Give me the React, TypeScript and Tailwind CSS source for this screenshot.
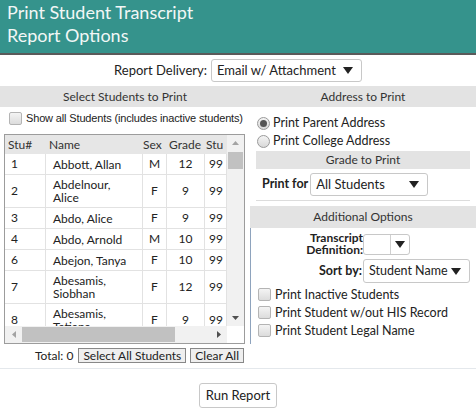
import { useState } from "react";

type Student = { id: number; name: string[]; sex: string; grade: number };

const students: Student[] = [
  { id: 1, name: ["Abbott, Allan"], sex: "M", grade: 12 },
  { id: 2, name: ["Abdelnour,", "Alice"], sex: "F", grade: 9 },
  { id: 3, name: ["Abdo, Alice"], sex: "F", grade: 9 },
  { id: 4, name: ["Abdo, Arnold"], sex: "M", grade: 10 },
  { id: 6, name: ["Abejon, Tanya"], sex: "F", grade: 10 },
  { id: 7, name: ["Abesamis,", "Siobhan"], sex: "F", grade: 12 },
  { id: 8, name: ["Abesamis,", "Tatiana"], sex: "F", grade: 9 },
];

const geo = { fontFamily: "Lato, 'Open Sans', sans-serif" };
const arial = { fontFamily: "'Liberation Sans', Arial, sans-serif" };

function Caret() {
  return (
    <svg width="10" height="7" viewBox="0 0 10 7" className="shrink-0">
      <path d="M0 0h10L5 7z" fill="#222" />
    </svg>
  );
}

function Select({ value, className }: { value: string; className: string }) {
  return (
    <div
      className={`flex items-center justify-between whitespace-nowrap rounded-[3px] border border-[#c8c8c8] bg-white pl-[5px] pr-[8px] text-[#222] ${className}`}
    >
      <span>{value}</span>
      <Caret />
    </div>
  );
}

function Check({ label }: { label: string }) {
  return (
    <label className="flex items-center gap-[4px] whitespace-nowrap leading-[15px]">
      <span className="h-[13px] w-[13px] shrink-0 rounded-[2px] border border-[#b4b4b4] bg-gradient-to-b from-[#f4f4f4] to-[#dcdcdc]" />
      <span>{label}</span>
    </label>
  );
}

function Radio({ label, checked }: { label: string; checked?: boolean }) {
  return (
    <div className="flex items-center gap-[3px] leading-[16px]">
      <span className="flex h-[13px] w-[13px] items-center justify-center rounded-full border border-[#9a9a9a] bg-gradient-to-b from-[#f4f4f4] to-[#d8d8d8]">
        {checked && <span className="h-[7px] w-[7px] rounded-full bg-[#555]" />}
      </span>
      <span>{label}</span>
    </div>
  );
}

function Bar({ children, className = "" }: { children: React.ReactNode; className?: string }) {
  return (
    <div className={`flex items-center justify-center bg-[#e3e3e3] text-[12px] text-[#333] ${className}`}>
      {children}
    </div>
  );
}

function StudentTable() {
  const cell = "flex items-center border-b border-r border-[#e2e2e2]";
  return (
    <div className="relative ml-[4px] mt-[8px] h-[210px] w-[241px] overflow-hidden border border-[#9c9c9c] bg-white text-[12px] text-[#222]">
      <div className="flex h-[19px] items-center bg-[#e6e6e6] text-[#333]">
        <div className="w-[41px] pl-[3px]">Stu#</div>
        <div className="w-[97px] pl-[3px]">Name</div>
        <div className="w-[24px]">Sex</div>
        <div className="w-[38px] pl-[2px]">Grade</div>
        <div className="w-[22px] overflow-hidden whitespace-nowrap pl-[1px]">Stu</div>
      </div>
      <div className="h-[172px] overflow-hidden">
        {students.map((s) => (
          <div key={s.id} className={`flex ${s.name.length > 1 ? "h-[33px]" : "h-[21px]"}`}>
            <div className={`${cell} w-[41px] pl-[6px]`}>{s.id}</div>
            <div className={`${cell} w-[97px] pl-[7px] leading-[13px]`}>
              <div>
                {s.name.map((n) => (
                  <div key={n}>{n}</div>
                ))}
              </div>
            </div>
            <div className={`${cell} w-[24px] justify-center`}>{s.sex}</div>
            <div className={`${cell} w-[38px] justify-center`}>{s.grade}</div>
            <div className={`${cell} w-[22px] overflow-hidden pl-[4px]`}>99</div>
          </div>
        ))}
      </div>
      {/* vertical scrollbar */}
      <div className="absolute right-0 top-0 flex h-[191px] w-[17px] flex-col items-center bg-[#f1f1f1]">
        <svg width="7" height="4" viewBox="0 0 7 4" className="mt-[6px]">
          <path d="M0 4h7L3.5 0z" fill="#a3a3a3" />
        </svg>
        <div className="mt-[7px] h-[17px] w-[15px] bg-[#c1c1c1]" />
        <div className="flex-1" />
        <svg width="7" height="4" viewBox="0 0 7 4" className="mb-[6px]">
          <path d="M0 0h7L3.5 4z" fill="#505050" />
        </svg>
      </div>
      {/* horizontal scrollbar */}
      <div className="absolute bottom-0 left-0 flex h-[17px] w-[222px] items-center bg-[#f1f1f1]">
        <svg width="4" height="7" viewBox="0 0 4 7" className="ml-[7px]">
          <path d="M4 0v7L0 3.5z" fill="#a3a3a3" />
        </svg>
        <div className="ml-[6px] h-[15px] w-[153px] bg-[#c1c1c1]" />
        <div className="flex-1" />
        <svg width="4" height="7" viewBox="0 0 4 7" className="mr-[6px]">
          <path d="M0 0v7L4 3.5z" fill="#505050" />
        </svg>
      </div>
    </div>
  );
}

export default function App() {
  const [delivery] = useState("Email w/ Attachment");
  return (
    <div className="h-[408px] w-[476px] overflow-hidden bg-white" style={geo}>
      <header className="h-[55px] border-b-2 border-[#5a5a5a] bg-[#35938c] px-[7px] pt-[1px] text-[18px] leading-[23px] text-[#f2f7f6]">
        <div>Print Student Transcript</div>
        <div>Report Options</div>
      </header>

      <div className="flex h-[31px] items-center justify-center gap-[4px] text-[13px] text-[#222]">
        <span>Report Delivery:</span>
        <Select value={delivery} className="h-[23px] w-[151px] text-[13px]" />
      </div>

      <div className="flex">
        <section className="w-[250px]">
          <Bar className="h-[21px]">Select Students to Print</Bar>
          <div className="mt-[4px] pl-[9px] text-[11px] tracking-[-0.15px] text-[#222]" style={arial}>
            <Check label="Show all Students (includes inactive students)" />
          </div>
          <StudentTable />
          <div className="mt-[4px] flex items-center justify-end gap-[4px] pr-[6px] text-[12px] leading-[14px] text-[#222]">
            <span className="mr-[1px]">Total: 0</span>
            <button className="h-[15px] border border-[#888] bg-[#efefef] px-[4px] leading-[12px]">
              Select All Students
            </button>
            <button className="h-[15px] border border-[#888] bg-[#efefef] px-[4px] leading-[12px]">
              Clear All
            </button>
          </div>
        </section>

        <section className="w-[226px] text-[12.5px] text-[#222]">
          <Bar className="h-[21px]">Address to Print</Bar>
          <div className="flex flex-col gap-[2px] pb-[2px] pl-[7px] pt-[8px]">
            <Radio label="Print Parent Address" checked />
            <Radio label="Print College Address" />
          </div>
          <Bar className="mx-[6px] h-[18px]">Grade to Print</Bar>
          <div className="mx-[6px] flex h-[32px] items-center gap-[2px] border-b border-[#dcdcdc] pl-[6px]">
            <span className="font-bold">Print for</span>
            <Select value="All Students" className="h-[23px] w-[118px] text-[13px]" />
          </div>
          <Bar className="mt-[5px] h-[22px]">Additional Options</Bar>
          <div className="border-l border-[#8ea3bd] pb-[6px]">
            <div className="flex items-center justify-end pr-[66px] pt-[4px]">
              <span className="text-right text-[12px] font-bold leading-[12px]">
                Transcript
                <br />
                Definition:
              </span>
              <div className="flex h-[21px] w-[47px] items-center rounded-[3px] border border-[#c8c8c8]">
                <div className="h-full w-[27px] border-r border-[#d0d0d0]" />
                <div className="flex flex-1 justify-center">
                  <Caret />
                </div>
              </div>
            </div>
            <div className="mt-[3px] flex items-center justify-end gap-[1px] pr-[6px]">
              <span className="font-bold">Sort by:</span>
              <Select value="Student Name" className="h-[24px] w-[107px] text-[12.5px]" />
            </div>
            <div className="mt-[4px] flex flex-col gap-[3px] pl-[7px]">
              <Check label="Print Inactive Students" />
              <Check label="Print Student w/out HIS Record" />
              <Check label="Print Student Legal Name" />
            </div>
          </div>
        </section>
      </div>

      <div className="mt-[5px] border-t border-[#e4e8ec]" />
      <div className="mt-[14px] flex justify-center">
        <button className="h-[25px] rounded-[3px] border border-[#c8c8c8] bg-white px-[6px] text-[13px] text-[#222]">
          Run Report
        </button>
      </div>
    </div>
  );
}
